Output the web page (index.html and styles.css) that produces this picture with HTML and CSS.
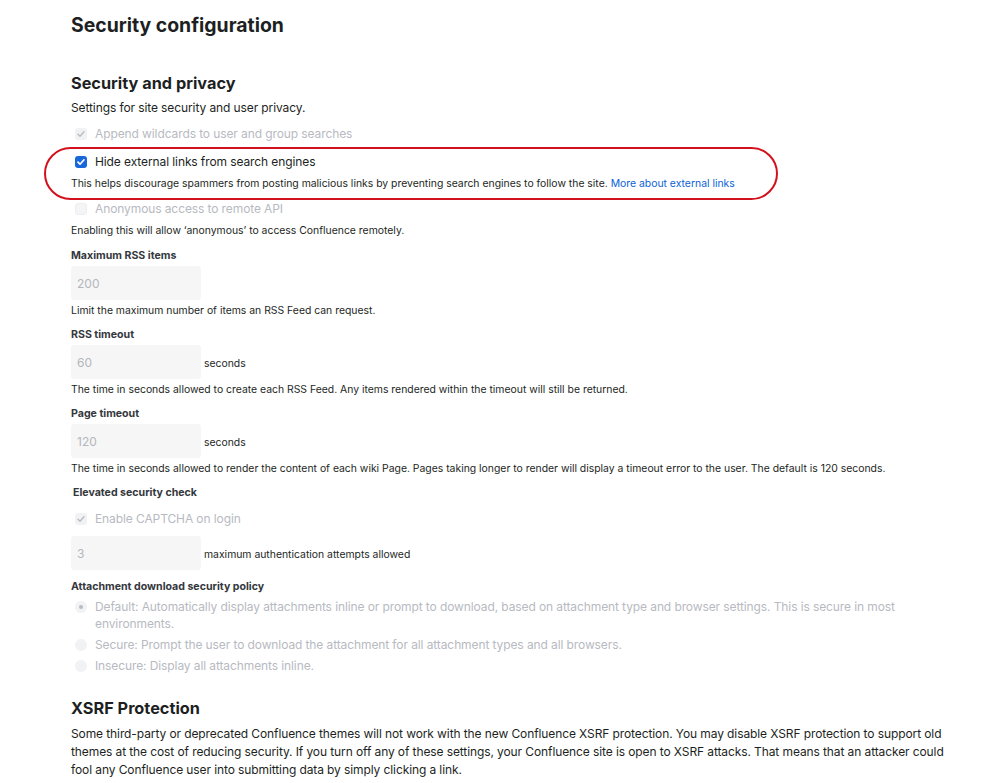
FILE: index.html
```html
<!DOCTYPE html>
<html lang="en">
<head>
    <meta charset="UTF-8">
    <meta name="viewport" content="width=device-width, initial-scale=1.0">
    <title>Security configuration</title>
    <link rel="stylesheet" href="styles.css">
</head>
<body>
    <div class="page">
        <h1>Security configuration</h1>

        <!-- Security and privacy -->
        <section class="section">
            <h2>Security and privacy</h2>
            <p class="intro">Settings for site security and user privacy.</p>

            <div class="check-row disabled gap-6">
                <span class="box checked-off"><svg viewBox="0 0 12 12"><path d="M3 6.2l2 2 4-4.4" /></svg></span>
                <span>Append wildcards to user and group searches</span>
            </div>

            <div class="highlight">
                <div class="check-row">
                    <span class="box checked-on"><svg viewBox="0 0 12 12"><path d="M3 6.2l2 2 4-4.4" /></svg></span>
                    <span>Hide external links from search engines</span>
                </div>
                <p class="help help-tight">This helps discourage spammers from posting malicious links by preventing search engines to follow the site. <a href="#">More about external links</a></p>
            </div>

            <div class="check-row disabled gap-7">
                <span class="box empty"></span>
                <span>Anonymous access to remote API</span>
            </div>
            <p class="help help-tight">Enabling this will allow ‘anonymous’ to access Confluence remotely.</p>

            <div class="field">
                <label class="field-label">Maximum RSS items</label>
                <div class="input-row"><input type="text" placeholder="200" disabled></div>
                <p class="help">Limit the maximum number of items an RSS Feed can request.</p>
            </div>

            <div class="field">
                <label class="field-label">RSS timeout</label>
                <div class="input-row"><input type="text" placeholder="60" disabled><span class="unit">seconds</span></div>
                <p class="help">The time in seconds allowed to create each RSS Feed. Any items rendered within the timeout will still be returned.</p>
            </div>

            <div class="field">
                <label class="field-label">Page timeout</label>
                <div class="input-row"><input type="text" placeholder="120" disabled><span class="unit">seconds</span></div>
                <p class="help">The time in seconds allowed to render the content of each wiki Page. Pages taking longer to render will display a timeout error to the user. The default is 120 seconds.</p>
            </div>

            <div class="field">
                <label class="field-label indent">Elevated security check</label>
                <div class="check-row disabled gap-8">
                    <span class="box checked-off"><svg viewBox="0 0 12 12"><path d="M3 6.2l2 2 4-4.4" /></svg></span>
                    <span>Enable CAPTCHA on login</span>
                </div>
                <div class="input-row after-check"><input type="text" placeholder="3" disabled><span class="unit">maximum authentication attempts allowed</span></div>
            </div>

            <div class="field attachments">
                <label class="field-label">Attachment download security policy</label>
                <div class="radios">
                    <div class="radio-row">
                        <span class="dot selected"></span>
                        <span>Default: Automatically display attachments inline or prompt to download, based on attachment type and browser settings. This is secure in most environments.</span>
                    </div>
                    <div class="radio-row">
                        <span class="dot"></span>
                        <span>Secure: Prompt the user to download the attachment for all attachment types and all browsers.</span>
                    </div>
                    <div class="radio-row">
                        <span class="dot"></span>
                        <span>Insecure: Display all attachments inline.</span>
                    </div>
                </div>
            </div>
        </section>

        <!-- XSRF -->
        <section class="section xsrf">
            <h2>XSRF Protection</h2>
            <p class="body-text">Some third-party or deprecated Confluence themes will not work with the new Confluence XSRF protection. You may disable XSRF protection to support old themes at the cost of reducing security. If you turn off any of these settings, your Confluence site is open to XSRF attacks. That means that an attacker could fool any Confluence user into submitting data by simply clicking a link.</p>
        </section>
    </div>
</body>
</html>
```

FILE: styles.css
```css
body {
    margin: 0;
    padding: 0;
    font-family: "Inter", "Liberation Sans", Arial, sans-serif;
    color: #1d1f23;
    background: #fff;
}

.page {
    padding: 0 0 0 71px;
    width: 886px;
}

h1 {
    font-size: 19.4px;
    line-height: 24px;
    font-weight: 700;
    margin: 13px 0 0;
}

h2 {
    font-size: 16.3px;
    line-height: 24px;
    font-weight: 700;
    margin: 0;
}

.section {
    margin-top: 34px;
}

.intro {
    font-size: 12px;
    letter-spacing: -0.1px;
    line-height: 20px;
    margin: 3px 0 0;
}

/* checkbox rows */
.check-row {
    display: flex;
    align-items: center;
    gap: 8px;
    padding-left: 4px;
    font-size: 12px;
    letter-spacing: -0.1px;
    line-height: 20px;
}

.check-row.disabled {
    color: #b7bac1;
}

.gap-6 { margin-top: 6px; }
.gap-7 { margin-top: 7px; }
.gap-8 { margin-top: 8px; }

.box {
    width: 12px;
    height: 12px;
    border-radius: 3px;
    box-sizing: border-box;
    display: flex;
    align-items: center;
    justify-content: center;
}

.box svg {
    width: 12px;
    height: 12px;
    fill: none;
    stroke-width: 1.4;
    stroke-linecap: round;
    stroke-linejoin: round;
}

.checked-off {
    background: #f1f2f4;
}

.checked-off svg {
    stroke: #b8bcc3;
}

.checked-on {
    background: #1868db;
}

.checked-on svg {
    stroke: #fff;
    stroke-width: 1.7;
}

.empty {
    background: #f4f5f6;
    border: 1px solid #eceef0;
}

/* highlighted option */
.highlight {
    position: relative;
    margin-top: 8px;
}

.highlight::before {
    content: "";
    position: absolute;
    top: -5px;
    bottom: -8px;
    left: -27px;
    width: 734px;
    border: 2.5px solid #d3111e;
    border-radius: 28px;
    box-sizing: border-box;
    pointer-events: none;
}

.help {
    font-size: 10.4px;
    line-height: 16px;
    margin: 3px 0 0;
}

.help-tight {
    margin-top: 4px;
}

.help a {
    color: #0c5fd8;
    text-decoration: none;
}

/* fields */
.field {
    margin-top: 9px;
}

.field + .field {
    margin-top: 8px;
}

.field-label {
    display: block;
    font-size: 10.6px;
    line-height: 16px;
    font-weight: 700;
    color: #34373d;
}

.field-label.indent {
    padding-left: 2px;
}

.input-row {
    display: flex;
    align-items: center;
    gap: 3px;
    margin-top: 2px;
}

.input-row.after-check {
    margin-top: 7px;
}

input {
    width: 130px;
    height: 34px;
    box-sizing: border-box;
    border: none;
    border-radius: 3px;
    background: #f6f6f7;
    padding: 0 6px;
    font-family: inherit;
    font-size: 12px;
}

input::placeholder {
    color: #b4b7bc;
}

.unit {
    font-size: 10.4px;
    padding-top: 2px;
}

.input-row.after-check .unit {
    padding-top: 3px;
}

/* radios */
.field.attachments {
    margin-top: 9px;
}

.radios {
    margin-top: 3px;
    display: flex;
    flex-direction: column;
    gap: 4px;
}

.radio-row {
    display: flex;
    align-items: flex-start;
    gap: 8px;
    padding-left: 4px;
    max-width: 836px;
    font-size: 12px;
    letter-spacing: -0.1px;
    line-height: 17px;
    color: #b7bac1;
}

.dot {
    flex: none;
    width: 12px;
    height: 12px;
    margin-top: 2.5px;
    border-radius: 50%;
    background: #f1f2f4;
    display: flex;
    align-items: center;
    justify-content: center;
}

.dot.selected::after {
    content: "";
    width: 4px;
    height: 4px;
    border-radius: 50%;
    background: #b8bcc3;
}

.xsrf {
    margin-top: 22px;
}

.body-text {
    font-size: 12px;
    letter-spacing: -0.1px;
    line-height: 18px;
    margin: 5px 0 0;
}
```
